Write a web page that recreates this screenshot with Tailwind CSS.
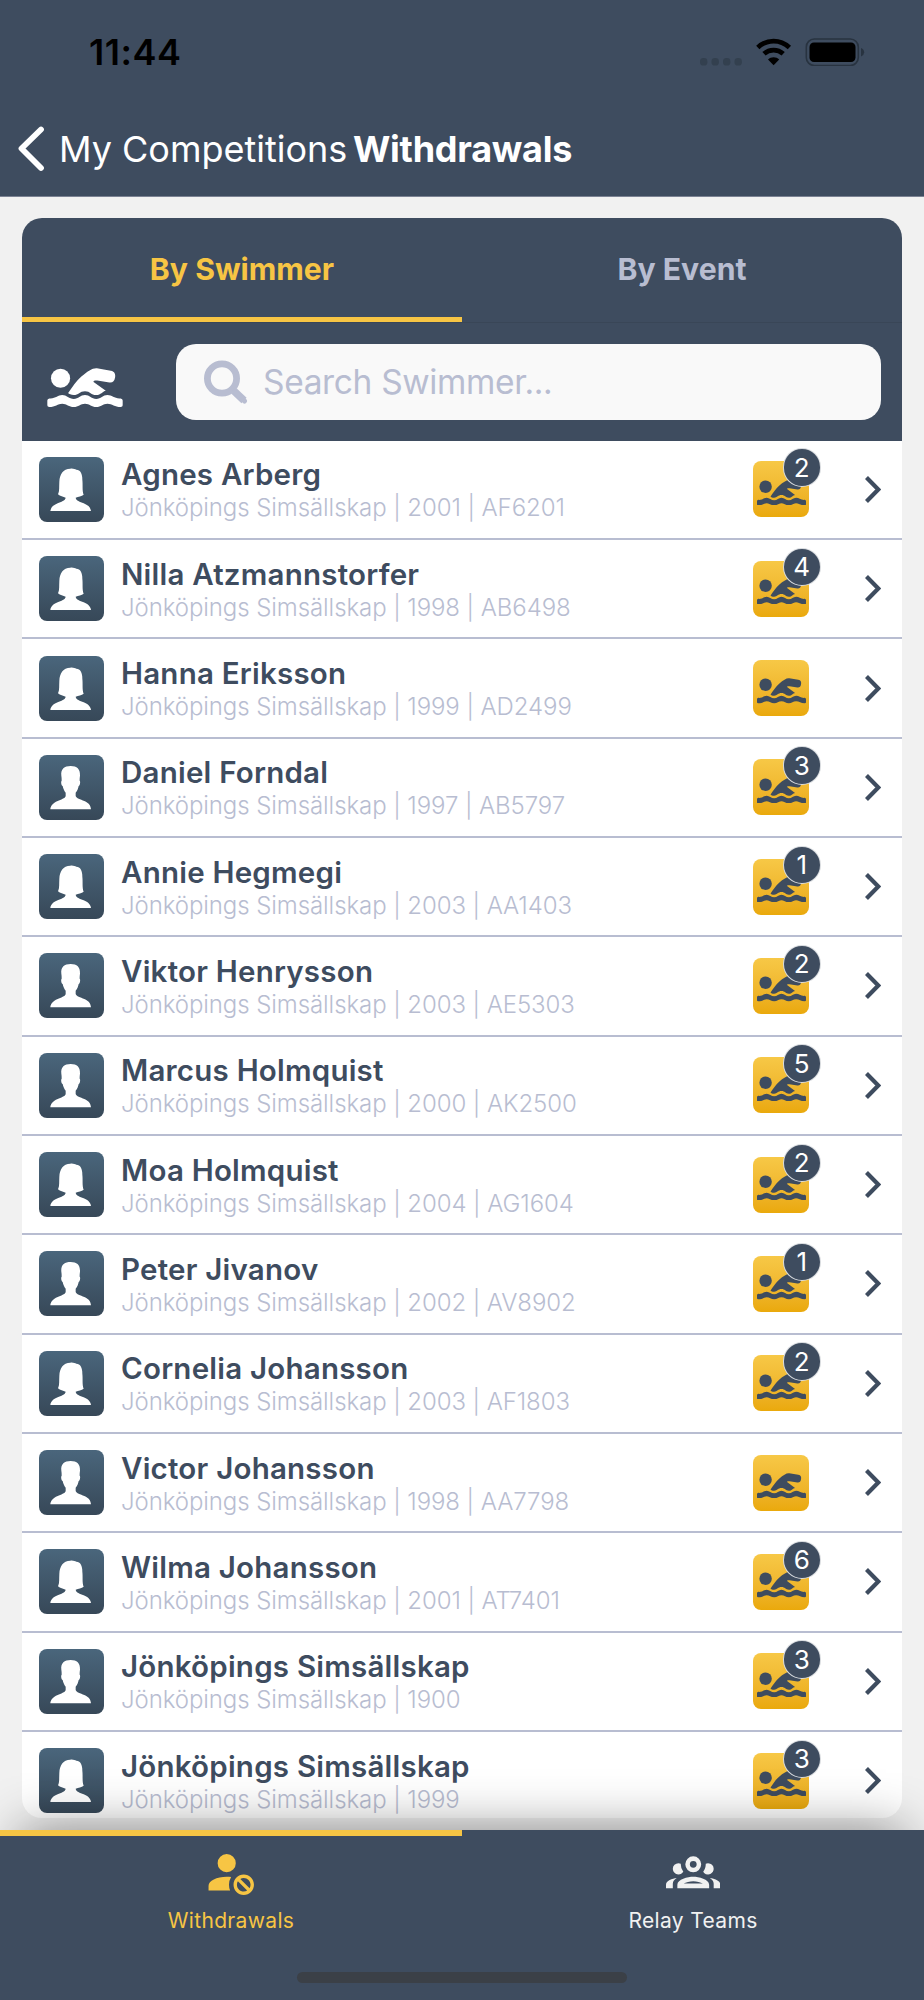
<!DOCTYPE html>
<html lang="en">
  <head>
    <meta charset="UTF-8" />
    <meta name="viewport" content="width=device-width, initial-scale=1.0" />

    <title>Withdrawals</title>

    <script src="https://cdn.jsdelivr.net/npm/@tailwindcss/browser@4"></script>
  </head>

  <body class="flex h-[2000px] w-[924px] flex-col overflow-hidden bg-[#f1f1f1] font-['Inter',sans-serif]">
    <!-- shared shapes -->
    <svg class="hidden" xmlns="http://www.w3.org/2000/svg">
      <symbol id="swimmer" viewBox="0 0 228 118">
        <circle cx="40" cy="31" r="29" />
        <path
          d="M63 76C76 58 88 38 103 26C124 9 136 0 150 1L192 8C204 10 207 19 205 29C203 40 198 45 188 44L151 38C144 37 138 39 140 42L177 69C166 71 163 82 148 82C132 82 130 70 114 70C98 70 94 82 80 82C72 82 65 79 63 76Z"
        />
        <path
          d="M6 92C24 94 32 82 45 82C58 82 66 94 80 94C94 94 100 82 114 82C128 82 134 94 148 94C162 94 168 82 182 82C196 82 204 94 222 92Q228 93 228 98V113Q228 118 222 118C204 118 196 108 182 108C168 108 162 118 148 118C134 118 128 108 114 108C100 108 94 118 80 118C66 118 58 108 45 108C32 108 24 118 6 118Q0 118 0 113V98Q0 93 6 92Z"
        />
      </symbol>
      <symbol id="female" viewBox="0 0 195 195">
        <path
          d="M57 112C62 102 60 90 61 74C62 52 72 35 94 35C103 34 108 37 112 38C124 38 130 50 130 68C132 84 129 102 134 113C128 118 118 119 110 122C111 131 123 134 134 139C148 145 154 151 156 162H34C36 151 42 145 56 139C66 134 79 131 80 122C73 119 63 118 57 112Z"
        />
      </symbol>
      <symbol id="male" viewBox="0 0 195 195">
        <path
          d="M95 33C114 33 124 42 123 62C122 68 122 72 122 77C125 79 123 92 119 93C117 102 115 107 110 113V123C112 130 124 133 136 138C150 144 155 152 156 163H34C35 153 41 144 56 138C66 133 78 131 80 123V113C75 107 73 101 71 93C67 92 65 79 68 77C68 72 68 68 67 62C65 42 76 33 95 33Z"
        />
      </symbol>
    </svg>

    <header class="flex h-[197px] shrink-0 flex-col border-b border-[#7b8293] bg-[#3e4c5f]">
      <div class="flex h-[104px] items-center justify-between pl-[89px] pr-[59px]">
        <span class="text-[36px] font-semibold leading-none tracking-[0.5px]">11:44</span>
        <svg class="h-7 w-[166px]" viewBox="0 0 166 28">
          <g fill="#33404f">
            <rect x="1" y="20" width="7.4" height="7.6" rx="3.4" />
            <rect x="12.5" y="20" width="7.4" height="7.6" rx="3.4" />
            <rect x="24" y="20" width="7.4" height="7.6" rx="3.4" />
            <rect x="35.5" y="20" width="7.4" height="7.6" rx="3.4" />
          </g>
          <path
            d="M58.8 9.4C68 .9 81.2 .9 90.4 9.4M65 15.8C70.5 10.9 78.7 10.9 84.2 15.8"
            fill="none"
            stroke="#000"
            stroke-width="4.8"
          />
          <path d="M69 21.5C72 18.6 77.2 18.6 80.2 21.5L74.6 27.3Z" />
          <rect x="107.3" y="1" width="52" height="26.5" rx="8" fill="none" stroke="#283340" stroke-width="1.6" />
          <rect x="110.5" y="4.5" width="46" height="19.5" rx="4.5" />
          <path d="M162 10Q165.2 11.5 165.2 14.2T162 18.5Z" fill="#283340" />
        </svg>
      </div>
      <div class="flex h-[90px] items-center pl-[18px] text-white">
        <svg class="h-[46px] w-[28px]" viewBox="0 0 28 46" fill="none" stroke="currentColor" stroke-width="5.8" stroke-linecap="round" stroke-linejoin="round">
          <path d="M23 3.5L3.5 22.5L23 42" />
        </svg>
        <span class="ml-[13px] w-[294px] whitespace-nowrap text-[36px] leading-none tracking-[0px]">My Competitions</span>
        <h1 class="whitespace-nowrap text-[36px] font-bold leading-none tracking-[-0.25px]">Withdrawals</h1>
      </div>
    </header>

    <main class="mx-[22px] mt-[21px] flex h-[1600px] shrink-0 flex-col overflow-hidden rounded-[20px] bg-white">
      <div class="h-[222.7px] shrink-0 bg-[#3e4c5f]">
        <div class="flex h-[105px] border-b border-[#394657] text-[30.2px] font-bold">
          <div class="flex flex-1 items-center justify-center border-b-[5px] border-[#f7c544] pt-1 text-[#f7c544]">By Swimmer</div>
          <div class="flex flex-1 items-center justify-center text-[#b8bdd1]">By Event</div>
        </div>
        <div class="flex items-center pl-[25px] pr-[21px] pt-[20.5px]">
          <svg class="mt-[11px] h-[39px] w-[76px] fill-white"><use href="#swimmer" /></svg>
          <div class="ml-[53px] flex h-[76px] flex-1 items-center rounded-[20px] bg-[#f9f9f9] pl-7 text-[#b8bdd1]">
            <svg class="h-11 w-11" viewBox="0 0 44 44" fill="none" stroke="currentColor">
              <circle cx="18" cy="18.5" r="14.6" stroke-width="6.8" />
              <path d="M30 31L40 40.5" stroke-width="7.5" />
              <path d="M31 32L40.5 41" stroke-width="5" stroke-linecap="round" />
            </svg>
            <span class="ml-[15px] mt-0.5 whitespace-nowrap text-[33.5px] leading-none tracking-[-0.35px]">Search Swimmer...</span>
          </div>
        </div>
      </div>
      <ul id="swimmers"></ul>
    </main>

    <footer class="relative mt-3 h-[170px] shrink-0">
      <div class="absolute inset-x-5 inset-y-0 shadow-[0_0_50px_rgba(0,0,0,0.45)]"></div>
      <nav class="relative flex h-full flex-col bg-[#3e4c5f]">
        <div class="flex h-[142px] text-[21px] tracking-[0.35px]">
          <div class="flex flex-1 flex-col items-center border-t-[6px] border-[#f7c544] pt-[9px] text-[#f7c544]">
            <svg class="h-[54.5px] w-[54.5px] fill-current" viewBox="0 0 24 24">
              <path
                d="M10 4A4 4 0 0 0 6 8A4 4 0 0 0 10 12A4 4 0 0 0 14 8A4 4 0 0 0 10 4M17.5 13C15 13 13 15 13 17.5C13 20 15 22 17.5 22C20 22 22 20 22 17.5C22 15 20 13 17.5 13M10 14C5.58 14 2 15.79 2 18V20H11.5A6.5 6.5 0 0 1 11 17.5A6.5 6.5 0 0 1 11.95 14.14C11.32 14.06 10.68 14 10 14M17.5 14.5C19.16 14.5 20.5 15.84 20.5 17.5C20.5 18.06 20.35 18.58 20.08 19L16 14.92C16.42 14.65 16.94 14.5 17.5 14.5M14.92 16L19 20.08C18.58 20.35 18.06 20.5 17.5 20.5C15.84 20.5 14.5 19.16 14.5 17.5C14.5 16.94 14.65 16.42 14.92 16Z"
              />
            </svg>
            <span class="mt-[7px] leading-7">Withdrawals</span>
          </div>
          <div class="flex flex-1 flex-col items-center pt-[15px] text-[#f1f1f1]">
            <svg class="h-[54.5px] w-[54.5px] fill-current" viewBox="0 0 24 24">
              <path
                d="M12 5a3.5 3.5 0 0 0-3.5 3.5A3.5 3.5 0 0 0 12 12a3.5 3.5 0 0 0 3.5-3.5A3.5 3.5 0 0 0 12 5m0 2a1.5 1.5 0 0 1 1.5 1.5A1.5 1.5 0 0 1 12 10a1.5 1.5 0 0 1-1.5-1.5A1.5 1.5 0 0 1 12 7M5.5 8A2.5 2.5 0 0 0 3 10.5c0 .94.53 1.75 1.29 2.18.36.2.77.32 1.21.32s.85-.12 1.21-.32c.37-.21.68-.51.91-.87A5.42 5.42 0 0 1 6.5 8.5v-.28c-.3-.14-.64-.22-1-.22m13 0c-.36 0-.7.08-1 .22v.28c0 1.2-.39 2.36-1.12 3.31.12.19.25.34.4.49a2.482 2.482 0 0 0 1.72.7c.44 0 .85-.12 1.21-.32.76-.43 1.29-1.24 1.29-2.18A2.5 2.5 0 0 0 18.5 8M12 14c-2.34 0-7 1.17-7 3.5V19h14v-1.5c0-2.33-4.66-3.5-7-3.5m-7.29.55C2.78 14.78 0 15.76 0 17.5V19h3v-1.93c0-1.01.69-1.85 1.71-2.52m14.58 0c1.02.67 1.71 1.51 1.71 2.52V19h3v-1.5c0-1.74-2.78-2.72-4.71-2.95M12 16c1.53 0 3.24.5 4.23 1H7.77c.99-.5 2.7-1 4.23-1z"
              />
            </svg>
            <span class="mt-[7px] leading-7">Relay Teams</span>
          </div>
        </div>
        <div class="mx-auto h-[11px] w-[330px] rounded-full bg-[#3b4047]"></div>
      </nav>
    </footer>

    <script>
      const club = "Jönköpings Simsällskap";
      // name, details, avatar, number of withdrawals
      const swimmers = [
        ["Agnes Arberg", "2001 | AF6201", "female", 2],
        ["Nilla Atzmannstorfer", "1998 | AB6498", "female", 4],
        ["Hanna Eriksson", "1999 | AD2499", "female", 0],
        ["Daniel Forndal", "1997 | AB5797", "male", 3],
        ["Annie Hegmegi", "2003 | AA1403", "female", 1],
        ["Viktor Henrysson", "2003 | AE5303", "male", 2],
        ["Marcus Holmquist", "2000 | AK2500", "male", 5],
        ["Moa Holmquist", "2004 | AG1604", "female", 2],
        ["Peter Jivanov", "2002 | AV8902", "male", 1],
        ["Cornelia Johansson", "2003 | AF1803", "female", 2],
        ["Victor Johansson", "1998 | AA7798", "male", 0],
        ["Wilma Johansson", "2001 | AT7401", "female", 6],
        [club, "1900", "male", 3],
        [club, "1999", "female", 3],
      ];

      const badge = (count) =>
        count
          ? `<span class="absolute -right-[12px] -top-[13px] flex h-[38.5px] w-[38.5px] items-center justify-center rounded-full border border-white/80 bg-[#3e4c5f] text-[26px] leading-none text-white">${count}</span>`
          : "";

      document.getElementById("swimmers").innerHTML = swimmers
        .map(
          ([name, details, avatar, count]) => `
        <li class="flex h-[99.33px] items-center border-b-2 border-[#b8bdd1] pl-[17px] pr-[21px] text-[#3e4c5f]">
          <svg class="h-[65px] w-[65px] rounded-lg bg-linear-to-b from-[#4a667c] to-[#374858] fill-white"><use href="#${avatar}" /></svg>
          <div class="ml-[17px] flex-1 whitespace-nowrap pt-0.5">
            <p class="text-[29.5px] font-semibold leading-9 tracking-[0.22px]">${name}</p>
            <p class="text-[24px] font-light leading-8 tracking-[-0.08px] text-[#b8bdd1]">${club} | ${details}</p>
          </div>
          <div class="relative flex h-[56px] w-[56px] items-center justify-center rounded-lg bg-linear-to-b from-[#f7c846] to-[#eaa90b]">
            <svg class="mt-1.5 h-[25.5px] w-[49px] fill-current"><use href="#swimmer" /></svg>
            ${badge(count)}
          </div>
          <svg class="ml-14 h-[27px] w-4" viewBox="0 0 16 27" fill="none" stroke="currentColor" stroke-width="4.2">
            <path d="M1.5 1.5L13.3 13.5L1.5 25.5" />
          </svg>
        </li>`
        )
        .join("");
    </script>
  </body>
</html>
